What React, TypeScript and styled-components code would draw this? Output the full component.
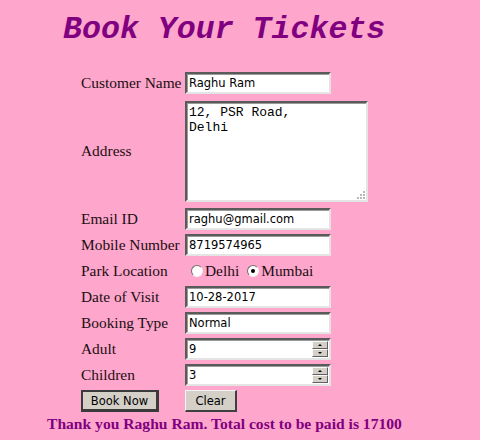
import styled, { createGlobalStyle } from "styled-components";

const GlobalStyle = createGlobalStyle`
  html, body {
    margin: 0;
    padding: 0;
    background-color: #ffa6cc;
  }
  body {
    font-family: "Liberation Serif", "Times New Roman", serif;
    color: #1a0f12;
  }
`;

const Page = styled.div`
  width: 480px;
  height: 440px;
  overflow: hidden;
  background-color: #ffa6cc;
`;

const Title = styled.h1`
  margin: 0;
  padding-top: 12px;
  padding-left: 63px;
  font-family: "Liberation Mono", "Courier New", monospace;
  font-size: 31.6px;
  font-style: italic;
  font-weight: 700;
  line-height: 36px;
  color: #800080;
`;

const FormGrid = styled.div`
  margin-top: 24px;
  margin-left: 81px;
  display: grid;
  grid-template-columns: 100px auto;
  column-gap: 4px;
  row-gap: 4px;
  align-items: center;
`;

const Label = styled.label`
  font-size: 15.4px;
  white-space: nowrap;
  line-height: 18px;
`;

const boxBorder = `
  border-width: 2px;
  border-style: solid;
  border-color: #5a5a5a #e4e4e4 #e4e4e4 #5a5a5a;
  box-shadow: inset 1px 1px 0 #9a9a9a;
`;

const TextInput = styled.input`
  box-sizing: border-box;
  width: 146px;
  height: 22px;
  margin: 0;
  padding: 1px 2px;
  ${boxBorder}
  background: #fff;
  font-family: "DejaVu Sans", Tahoma, sans-serif;
  font-size: 11.5px;
  color: #000;
  outline: none;
`;

const AddressWrap = styled.span`
  position: relative;
  display: inline-flex;
  width: 183px;
  margin: 3px 0 2px;
`;

const AddressBox = styled.textarea`
  box-sizing: border-box;
  width: 183px;
  height: 101px;
  margin: 0;
  padding: 2px;
  ${boxBorder}
  background: #fff;
  font-family: "Liberation Mono", "Courier New", monospace;
  font-size: 13px;
  line-height: 15px;
  color: #000;
  resize: none;
  outline: none;
`;

const Grip = styled.svg`
  position: absolute;
  right: 3px;
  bottom: 3px;
`;

const RadioGroup = styled.div`
  height: 22px;
  display: flex;
  align-items: center;
  padding-left: 6px;
  font-size: 15.4px;
`;

const RadioOption = styled.span`
  display: inline-flex;
  align-items: center;
  margin-right: 8px;
`;

const RadioDot = styled.span<{ checked?: boolean }>`
  box-sizing: border-box;
  width: 12px;
  height: 12px;
  margin-right: 2px;
  border-radius: 50%;
  border: 1px solid;
  border-color: #707070 #f0f0f0 #f0f0f0 #707070;
  background: #fff;
  display: inline-flex;
  align-items: center;
  justify-content: center;

  &::after {
    content: "";
    width: 4px;
    height: 4px;
    border-radius: 50%;
    background: ${(props) => (props.checked ? "#000" : "transparent")};
  }
`;

const NumberBox = styled.div`
  box-sizing: border-box;
  width: 146px;
  height: 22px;
  display: flex;
  align-items: center;
  ${boxBorder}
  background: #fff;
`;

const NumberText = styled.input`
  flex: 1;
  min-width: 0;
  border: none;
  padding: 1px 2px;
  background: transparent;
  font-family: "DejaVu Sans", Tahoma, sans-serif;
  font-size: 11.5px;
  color: #000;
  outline: none;
`;

const Spinner = styled.div`
  width: 16px;
  margin-right: 1px;
  display: flex;
  flex-direction: column;
`;

const SpinButton = styled.span<{ down?: boolean }>`
  box-sizing: border-box;
  height: 8px;
  background: #d4d0c8;
  border-width: 1px;
  border-style: solid;
  border-color: #fafafa #606060 #606060 #fafafa;
  display: flex;
  align-items: center;
  justify-content: center;

  &::after {
    content: "";
    border-left: 2px solid transparent;
    border-right: 2px solid transparent;
    ${(props) =>
      props.down ? "border-top: 2px solid #000;" : "border-bottom: 2px solid #000;"}
  }
`;

const Button = styled.button<{ primary?: boolean }>`
  box-sizing: border-box;
  height: 22px;
  margin: 0;
  padding: 0;
  white-space: nowrap;
  background: #d4d0c8;
  font-family: "DejaVu Sans", Tahoma, sans-serif;
  font-size: 11.5px;
  color: #000;
  border-width: ${(props) => (props.primary ? "2px 3px 3px 2px" : "1px 2px 2px 1px")};
  border-style: solid;
  border-color: ${(props) =>
    props.primary
      ? "#3a3a3a #3a3a3a #3a3a3a #3a3a3a"
      : "#f4f4f4 #404040 #404040 #f4f4f4"};
  justify-self: start;
`;

const BookButton = styled(Button)`
  width: 78px;
`;

const ClearButton = styled(Button)`
  width: 52px;
`;

const ThankYou = styled.p`
  margin: 3px 0 0 47px;
  font-size: 15.6px;
  font-weight: 700;
  color: #800080;
  white-space: nowrap;
`;

const NumberField = ({ value }: { value: string }) => (
  <NumberBox>
    <NumberText defaultValue={value} />
    <Spinner>
      <SpinButton />
      <SpinButton down />
    </Spinner>
  </NumberBox>
);

const App = () => {
  return (
    <Page>
      <GlobalStyle />
      <Title>Book Your Tickets</Title>
      <FormGrid>
        <Label>Customer Name</Label>
        <TextInput defaultValue="Raghu Ram" />

        <Label>Address</Label>
        <AddressWrap>
          <AddressBox defaultValue={"12, PSR Road,\nDelhi"} />
          <Grip width="9" height="9" viewBox="0 0 9 9">
            <g fill="#b8b8b8">
              <rect x="7" y="1" width="2" height="2" />
              <rect x="4" y="4" width="2" height="2" />
              <rect x="7" y="4" width="2" height="2" />
              <rect x="1" y="7" width="2" height="2" />
              <rect x="4" y="7" width="2" height="2" />
              <rect x="7" y="7" width="2" height="2" />
            </g>
          </Grip>
        </AddressWrap>

        <Label>Email ID</Label>
        <TextInput defaultValue="raghu@gmail.com" />

        <Label>Mobile Number</Label>
        <TextInput defaultValue="8719574965" />

        <Label>Park Location</Label>
        <RadioGroup>
          <RadioOption>
            <RadioDot />
            Delhi
          </RadioOption>
          <RadioOption>
            <RadioDot checked />
            Mumbai
          </RadioOption>
        </RadioGroup>

        <Label>Date of Visit</Label>
        <TextInput defaultValue="10-28-2017" />

        <Label>Booking Type</Label>
        <TextInput defaultValue="Normal" />

        <Label>Adult</Label>
        <NumberField value="9" />

        <Label>Children</Label>
        <NumberField value="3" />

        <BookButton primary>Book Now</BookButton>
        <ClearButton>Clear</ClearButton>
      </FormGrid>
      <ThankYou>Thank you Raghu Ram. Total cost to be paid is 17100</ThankYou>
    </Page>
  );
};

export default App;
